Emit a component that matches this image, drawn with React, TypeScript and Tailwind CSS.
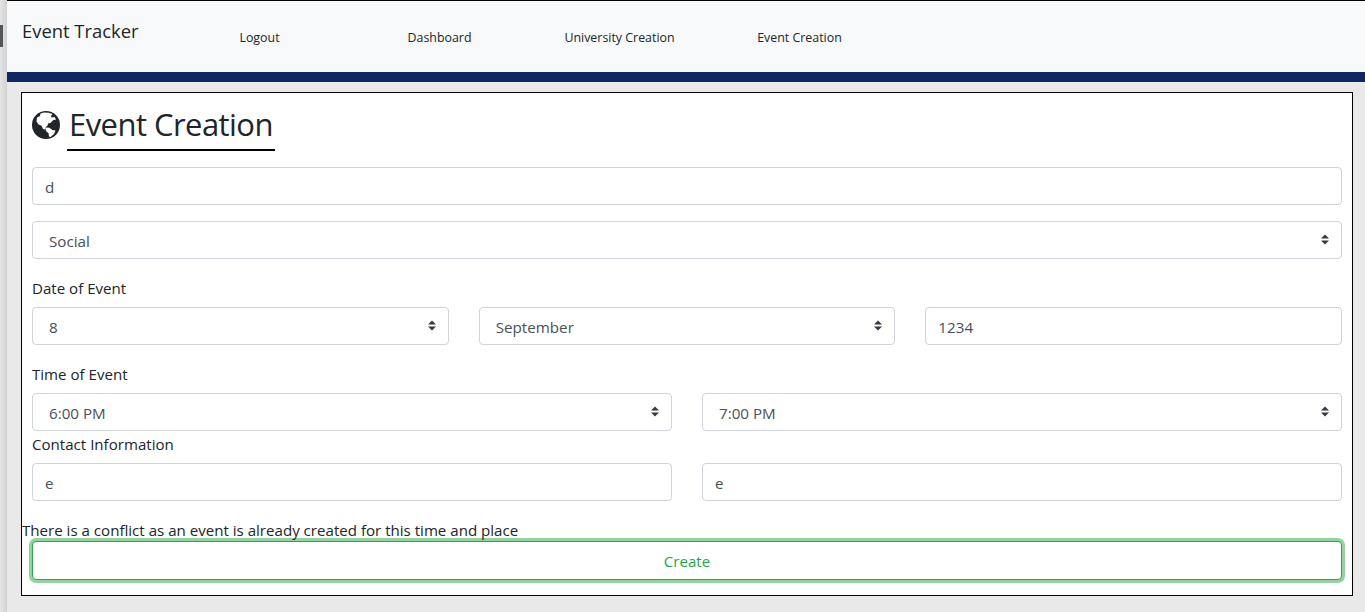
import React from 'react';

const Globe: React.FC = () => (
  <svg viewBox="0 0 28 28" className="w-7 h-7 shrink-0">
    <circle cx="14" cy="14" r="14" fill="#212529" />
    <path
      fill="#fff"
      d="M8.500 2.500L12 1.500l4.500.2 4 1.300-1.500 2 .5 1.500 3.200-.5 1.300 2.500-3 .8-2.500 2.700-2.500.5-.5 2.200-2 1.500-.5 2.300-2-.5-1.500-3.300-3-1.200L4.500 10.500 5 6.500 8 5z"
    />
    <path fill="#fff" d="M13 16.500l4.500.2 2.800 2.300 3.200.5-1.500 3.500-3.500 3-1.500-.5-.5-3.500-2.200-1.500z" />
  </svg>
);

const fieldClass =
  'block w-full h-[38px] px-3 pt-px bg-white border border-[#ced4da] rounded-[4px] text-[15.2px] text-[#495057] outline-none';

const Select: React.FC<{ value: string }> = ({ value }) => (
  <div className="relative flex-1">
    <select
      defaultValue={value}
      className="block w-full h-[38px] pl-4 pr-8 pt-[3px] bg-white border border-[#ced4da] rounded-[4px] text-[15.2px] text-[#495057] outline-none appearance-none"
    >
      <option>{value}</option>
    </select>
    <svg
      viewBox="0 0 8 10"
      className="absolute right-[13px] top-[13px] w-2 h-[11px] pointer-events-none"
      fill="#343a40"
    >
      <path d="M4 0L8 4H0zM4 10L0 6h8z" />
    </svg>
  </div>
);

const Input: React.FC<{ value: string }> = ({ value }) => (
  <div className="flex-1">
    <input type="text" defaultValue={value} className={fieldClass} />
  </div>
);

export default function App() {
  const links = ['Logout', 'Dashboard', 'University Creation', 'Event Creation'];

  return (
    <div className="flex h-[612px] overflow-hidden bg-[#e9e9e9] font-['Open_Sans',sans-serif] text-[#212529]">
      {/* window edge */}
      <div className="w-[7px] shrink-0 bg-gradient-to-r from-[#e4e4e4] to-[#d2d2d2] pt-[25px]">
        <div className="w-[3px] h-[22px] bg-[#555555]" />
      </div>

      <div className="flex-1 min-w-0">
        <nav className="h-[72px] bg-[#f8f9fa] border-t border-black flex">
          <div className="w-[162.5px] pl-[15px] pt-[17px] text-[18.4px] leading-[26px] shrink-0">
            Event Tracker
          </div>
          {links.map((link) => (
            <a key={link} className="w-[180px] pt-[28px] text-center text-[12.4px] leading-[17px]">
              {link}
            </a>
          ))}
        </nav>
        <div className="h-[10px] bg-[#0f2862]" />

        <main className="mt-[10px] ml-[14px] mr-[12px] h-[504px] bg-white border border-black">
          <div className="flex items-start pl-[10px] pt-[18px]">
            <Globe />
            <h1 className="ml-[7px] px-[2px] -mt-[7px] h-[45px] text-[31px] leading-[40px] tracking-[-0.55px] border-b-2 border-black box-content">
              Event Creation
            </h1>
          </div>

          <div className="px-[10px] mt-[16px]">
            <Input value="d" />
            <div className="mt-4 flex">
              <Select value="Social" />
            </div>

            <p className="mt-[19px] text-[15.1px] leading-[20px]">Date of Event</p>
            <div className="mt-[9px] flex gap-[30px]">
              <Select value="8" />
              <Select value="September" />
              <Input value="1234" />
            </div>

            <p className="mt-[19px] text-[15.1px] leading-[20px]">Time of Event</p>
            <div className="mt-[9px] flex gap-[30px]">
              <Select value="6:00 PM" />
              <Select value="7:00 PM" />
            </div>

            <p className="mt-[3px] text-[15.1px] leading-[20px]">Contact Information</p>
            <div className="mt-[9px] flex gap-[30px]">
              <Input value="e" />
              <Input value="e" />
            </div>
          </div>

          <p className="mt-[19px] mb-[1px] text-[15.1px] leading-[20px]">
            There is a conflict as an event is already created for this time and place
          </p>
          <div className="px-[10px]">
            <button className="block w-full h-[39px] pt-px border border-[#28a745] rounded-[4px] text-[15.1px] text-[#28a745] bg-white shadow-[0_0_0_3px_rgba(40,167,69,0.5)]">
              Create
            </button>
          </div>
        </main>
      </div>
    </div>
  );
}
